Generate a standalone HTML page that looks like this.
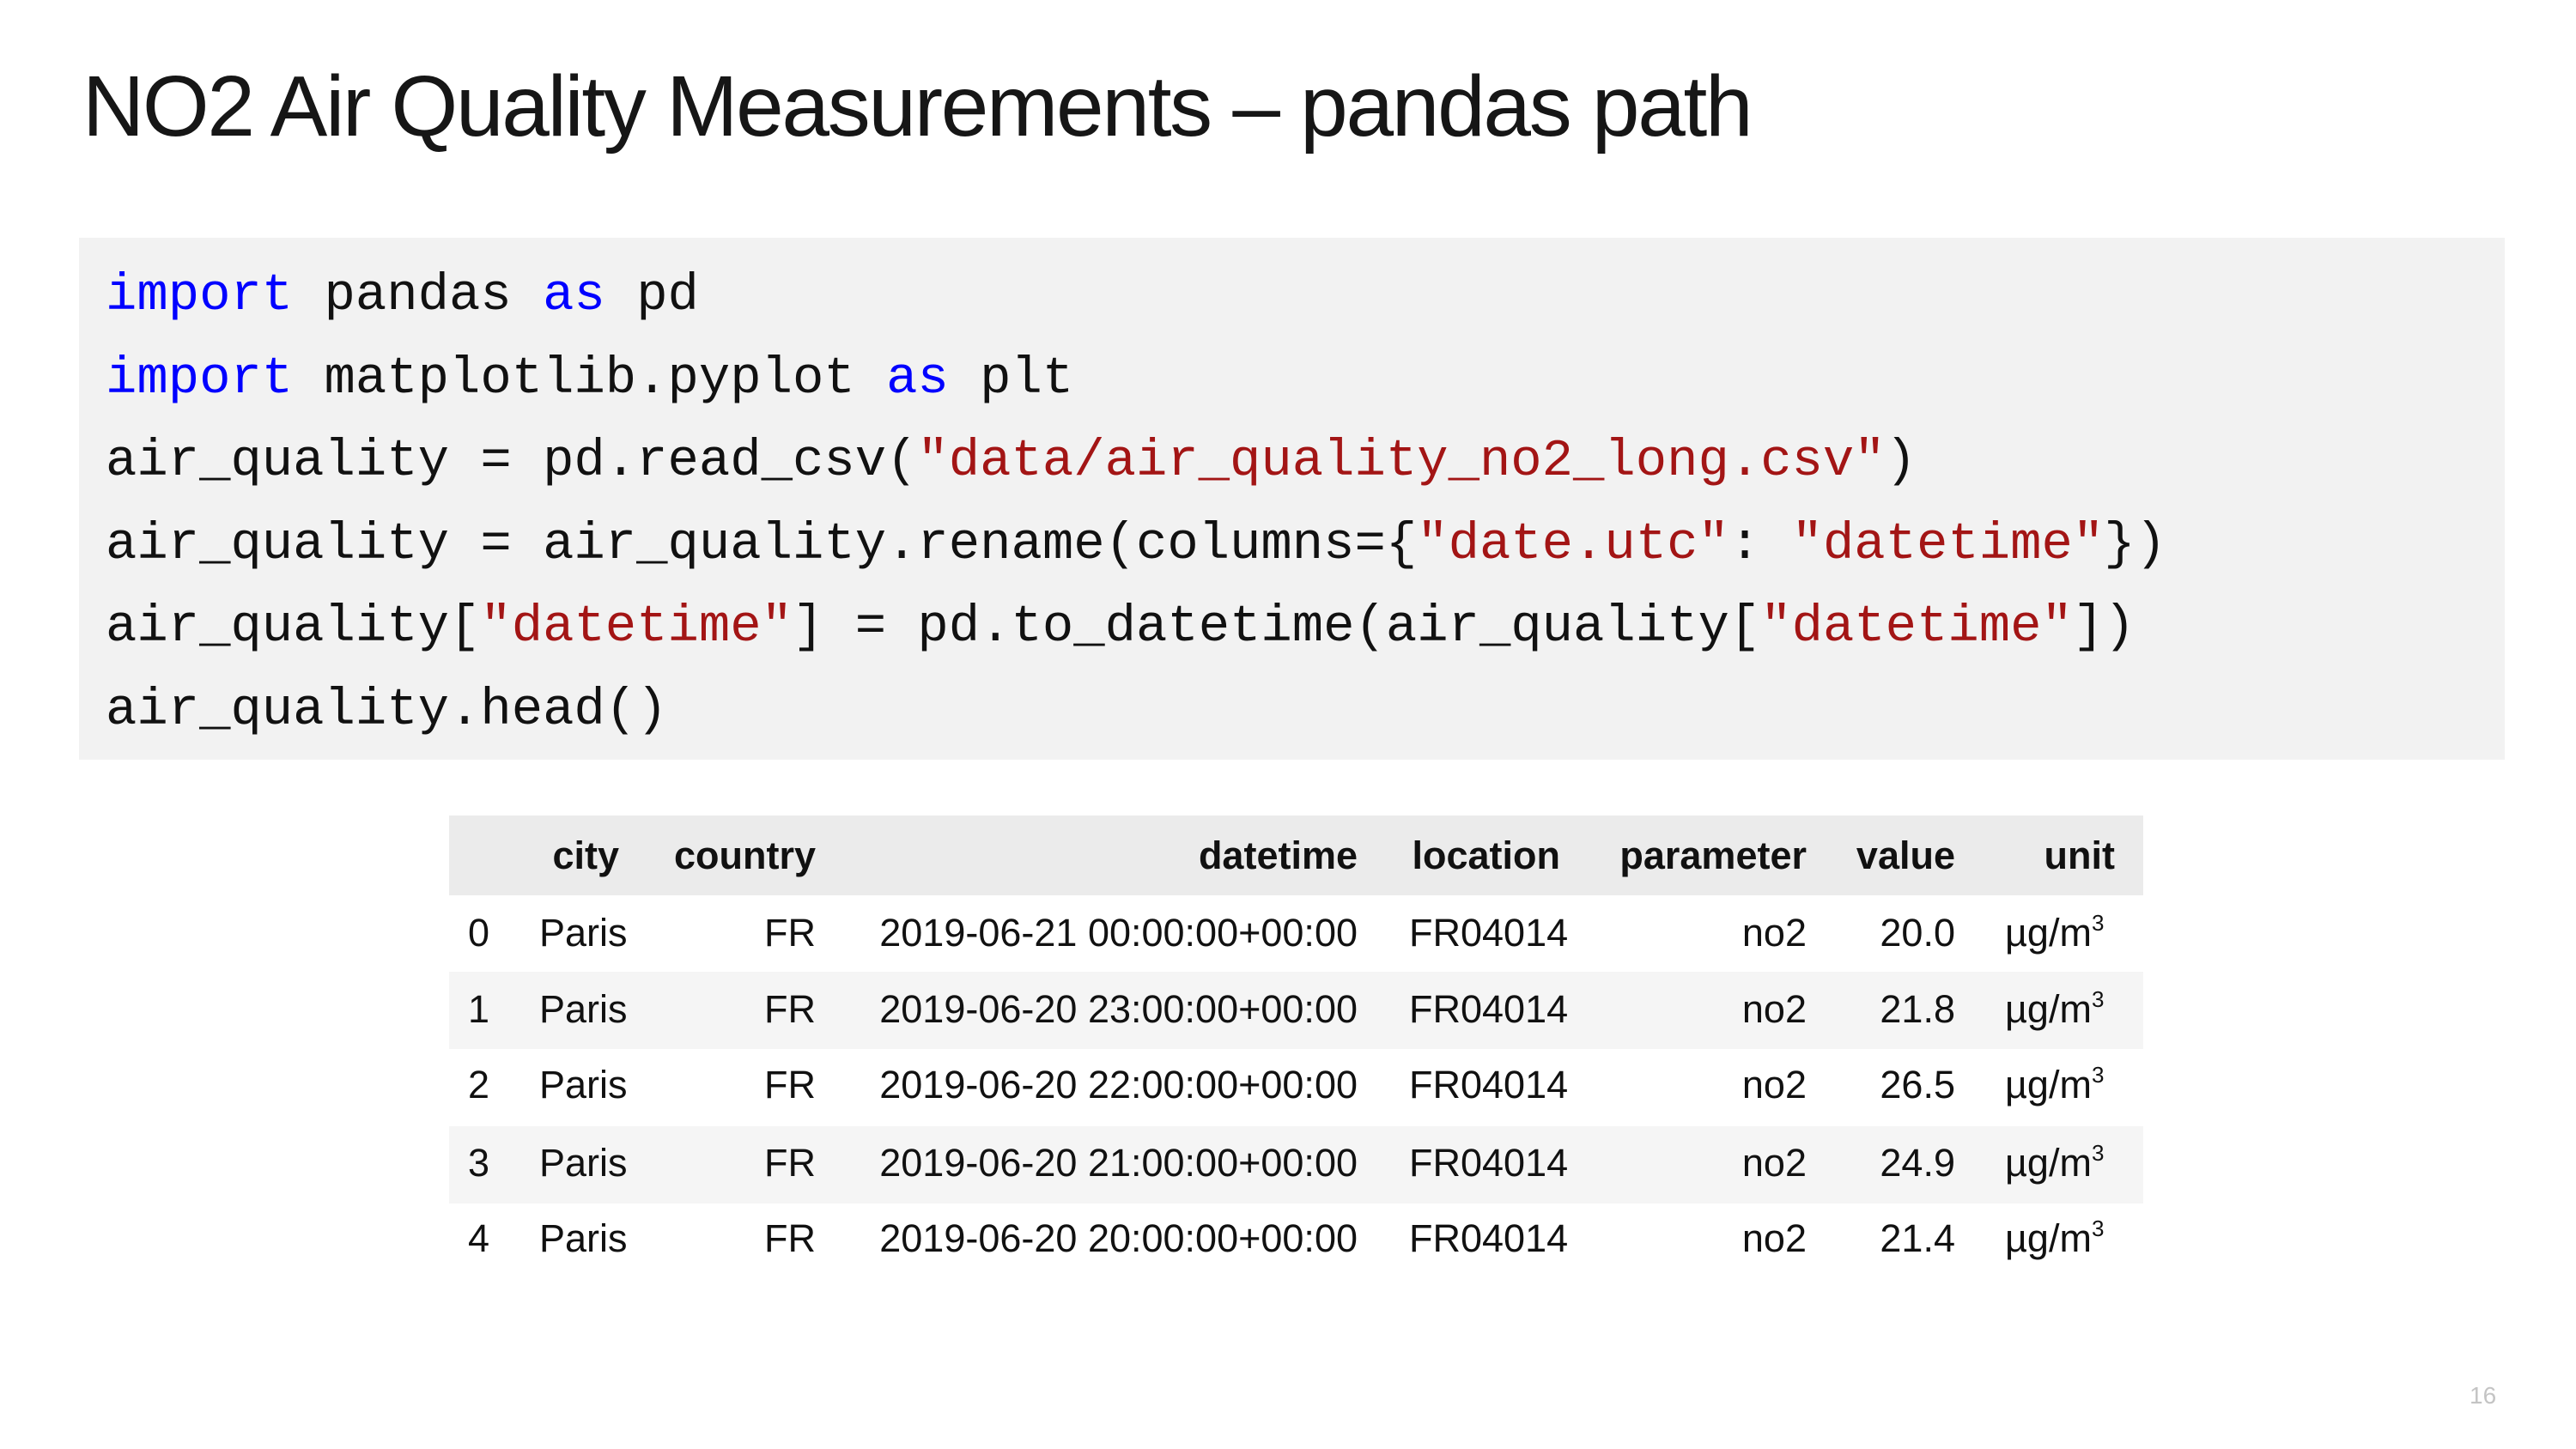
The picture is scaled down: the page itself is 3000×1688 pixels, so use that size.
<!DOCTYPE html>
<html><head><meta charset="utf-8"><style>
body{margin:0;width:3000px;height:1688px;background:#fff;position:relative;overflow:hidden;font-family:"Liberation Sans",sans-serif;color:#111}
.t{position:absolute;left:96px;top:59px;font-size:100px;line-height:130px;color:#161616;letter-spacing:-2.3px}
.code{position:absolute;left:92px;top:277px;width:2825px;height:608px;background:#f2f2f2}
.code pre{margin:0;position:absolute;left:31px;top:20px;font-family:"Liberation Mono",monospace;font-size:60.6px;line-height:96.5px;color:#111}
.k{color:#0000ff}.s{color:#a31515}
.band{position:absolute;left:523px;width:1973px}
.c{position:absolute;font-size:45px;line-height:60px;white-space:nowrap}
.r{text-align:right}
.h{font-weight:bold}
.pn{position:absolute;left:2876px;top:1610px;font-size:28px;color:#c4c4c4}
</style></head><body>
<div class="t">NO2 Air Quality Measurements – pandas path</div>
<div class="code"><pre><span class="k">import</span> pandas <span class="k">as</span> pd
<span class="k">import</span> matplotlib.pyplot <span class="k">as</span> plt
air_quality = pd.read_csv(<span class="s">"data/air_quality_no2_long.csv"</span>)
air_quality = air_quality.rename(columns={<span class="s">"date.utc"</span>: <span class="s">"datetime"</span>})
air_quality[<span class="s">"datetime"</span>] = pd.to_datetime(air_quality[<span class="s">"datetime"</span>])
air_quality.head()</pre></div>
<div class="band" style="top:950px;height:93px;background:#ebebeb"></div>
<div class="band" style="top:1132px;height:90px;background:#f5f5f5"></div>
<div class="band" style="top:1312px;height:90px;background:#f5f5f5"></div>
<div id="tbl"></div>
<div class="pn">16</div>
<script>
var rows=[["0","2019-06-21 00:00:00+00:00","20.0"],["1","2019-06-20 23:00:00+00:00","21.8"],["2","2019-06-20 22:00:00+00:00","26.5"],["3","2019-06-20 21:00:00+00:00","24.9"],["4","2019-06-20 20:00:00+00:00","21.4"]];
var ys=[1087,1176,1264,1355,1443];var h='';
function R(x,y,t,cl){return '<div class="c r '+(cl||'')+'" style="right:'+(3000-x+6)+'px;top:'+(y-30)+'px">'+t+'</div>';}
function L(x,y,t,cl){return '<div class="c '+(cl||'')+'" style="left:'+(x-3)+'px;top:'+(y-30)+'px">'+t+'</div>';}
var hy=997;
h+=R(727,hy,'city','h')+R(956,hy,'country','h')+R(1587,hy,'datetime','h')+R(1823,hy,'location','h')+R(2110,hy,'parameter','h')+R(2283,hy,'value','h')+R(2469,hy,'unit','h');
rows.forEach(function(r,i){var y=ys[i];
h+=L(548,y,r[0])+L(631,y,'Paris')+R(956,y,'FR')+R(1587,y,r[1])+L(1644,y,'FR04014')+R(2110,y,'no2')+R(2283,y,r[2])+L(2338,y,'µg/m<sup style="font-size:26px;vertical-align:18px;line-height:0">3</sup>');});
document.getElementById('tbl').innerHTML=h;
</script>
</body></html>
